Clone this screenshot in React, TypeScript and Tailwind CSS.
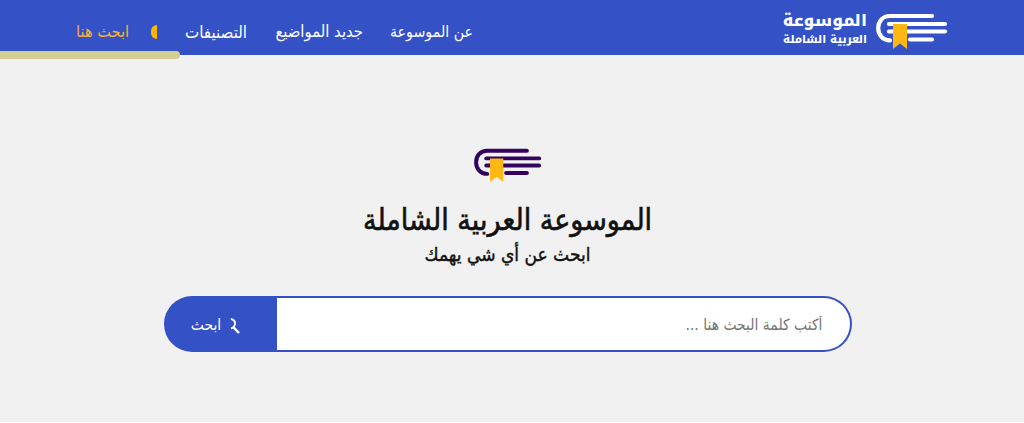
import clsx from "clsx";

const navLinks = [
  { label: "عن الموسوعة", width: "w-[82px]", size: "text-[15.8px]" },
  { label: "جديد المواضيع", width: "w-[88px]", size: "text-[16.5px]" },
  { label: "التصنيفات", width: "w-[62px]", size: "text-[16.8px]" },
];

function BookLogo({ className, color }: { className?: string; color: string }) {
  return (
    <svg viewBox="0 0 72 36" className={className} fill="none">
      <g stroke={color} strokeWidth="4.2" strokeLinecap="round">
        <path d="M56 3H14C6.500 3 2.200 8.500 2.200 15C2.200 21.500 6.500 27.400 14 27.400" />
        <path d="M13 11H69" />
        <path d="M13 18.500H69" />
        <path d="M34 26.500H56" />
      </g>
      <path d="M17 11H31V36L24 30.500L17 36Z" fill="#fdb813" />
    </svg>
  );
}

function SearchIcon() {
  return (
    <svg viewBox="0 0 10 16" className="h-4 w-2.5 shrink-0" fill="none" stroke="white">
      <path d="M1 0.800C4.200 1.800 5.600 4.300 4.800 7C4.200 8.800 2.800 10 1 10.600" strokeWidth="1.800" />
      <path d="M3.200 9L9 15" strokeWidth="2.500" />
    </svg>
  );
}

function Header() {
  return (
    <header className="relative h-[55px] bg-[#3451c6] px-[76px]">
      <div className="flex h-full items-center justify-between">
        <a className="flex items-center gap-[9px] text-white">
          <BookLogo color="white" className="mt-[7px] h-9 w-[72px]" />
          <span className="mt-[3px] flex w-[84px] flex-col whitespace-nowrap font-['Noto_Kufi_Arabic','DejaVu_Sans',sans-serif] font-extrabold">
            <span className="text-[16.4px] leading-[20px]">الموسوعة</span>
            <span className="text-[10.9px] leading-[17px]">العربية الشاملة</span>
          </span>
        </a>

        <nav className="mt-[9px] flex items-center leading-6 text-white">
          {navLinks.map((link) => (
            <a key={link.label} className={clsx("ml-7 whitespace-nowrap", link.width, link.size)}>
              {link.label}
            </a>
          ))}
          <span className="ml-[22px] h-[14px] w-[6px] rounded-l-full bg-[#ffb900]" />
          <a className="w-[53px] whitespace-nowrap text-[16.2px] text-[#fdaf3c]">ابحث هنا</a>
        </nav>
      </div>
      <div className="absolute left-0 top-[51px] h-2 w-[180px] rounded-r-full bg-[#d1cf92]" />
    </header>
  );
}

function SearchForm() {
  return (
    <form className="mt-[28px] flex h-[56px] w-[688px] overflow-hidden rounded-full bg-[#3451c6] p-[2px]">
      <input
        type="text"
        placeholder="أكتب كلمة البحث هنا ..."
        className="min-w-0 flex-1 rounded-r-full bg-white px-[27px] pt-1 text-[15.5px] outline-none placeholder:text-[#757575]"
      />
      <button
        type="button"
        className="flex w-[111px] items-center gap-[8px] pr-[37px] pt-[3px] text-[15.5px] text-white"
      >
        <SearchIcon />
        <span className="w-[31px] whitespace-nowrap">ابحث</span>
      </button>
    </form>
  );
}

export default function App() {
  return (
    <div
      dir="rtl"
      className="h-[423px] overflow-hidden bg-white font-['DejaVu_Sans_Condensed','DejaVu_Sans',sans-serif]"
    >
      <Header />
      <main className="flex h-[367px] flex-col items-center bg-[#f1f1f1] pr-[9px] pt-[93px] text-[#111]">
        <BookLogo color="#34015e" className="h-[34px] w-[68px]" />
        <h1 className="mt-[18px] whitespace-nowrap text-[30px] leading-[40px] [-webkit-text-stroke:0.6px]">
          الموسوعة العربية الشاملة
        </h1>
        <p className="whitespace-nowrap text-[19px] leading-[28px] [-webkit-text-stroke:0.4px]">
          ابحث عن أي شي يهمك
        </p>
        <SearchForm />
      </main>
    </div>
  );
}
